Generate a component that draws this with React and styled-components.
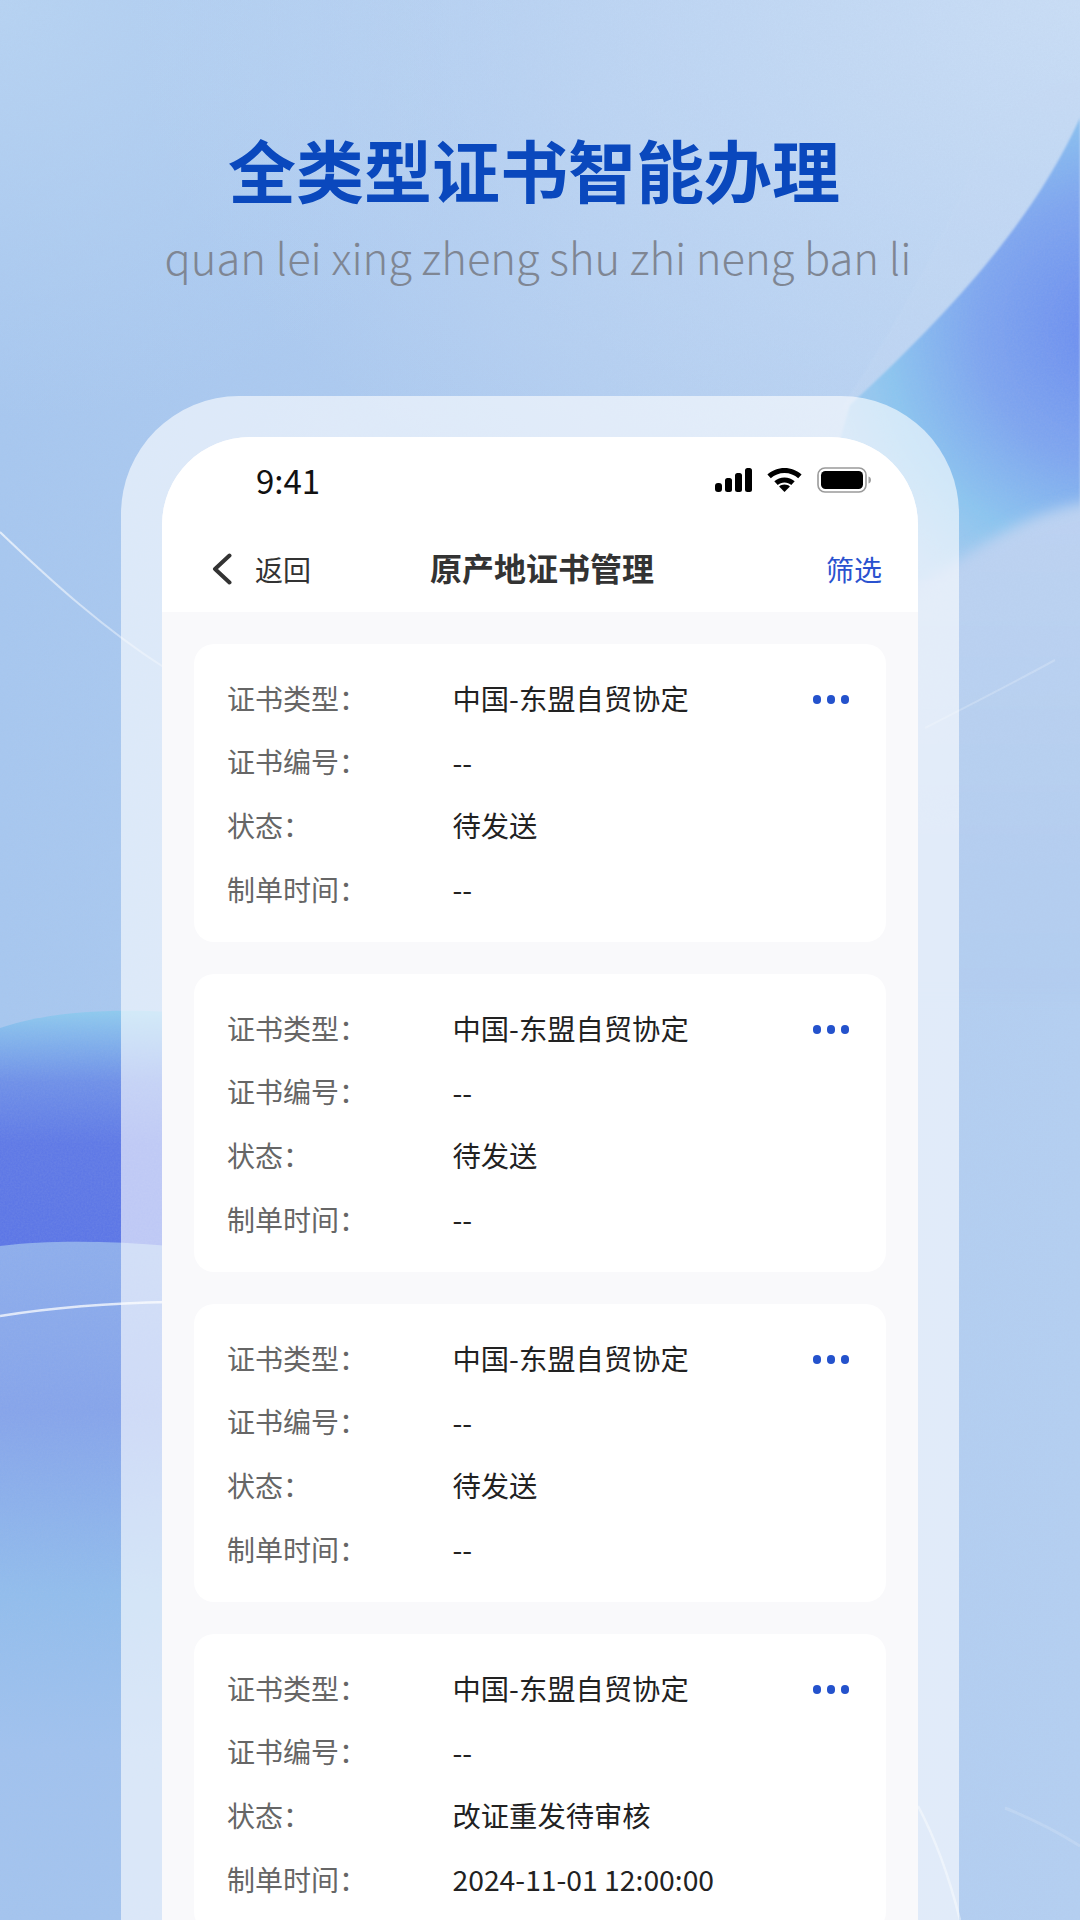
import React from 'react';
import styled, { createGlobalStyle } from 'styled-components';

const GlobalStyle = createGlobalStyle`
  html, body {
    margin: 0;
    padding: 0;
    background: #b5d0f1;
  }
  * {
    box-sizing: border-box;
  }
`;

const Page = styled.div`
  position: relative;
  width: 1080px;
  height: 1920px;
  overflow: hidden;
  font-family: "Noto Sans CJK SC", "Noto Sans", sans-serif;
  background:
    radial-gradient(ellipse 950px 620px at 100% 0, #c9ddf5 0%, rgba(201, 221, 245, 0) 100%),
    radial-gradient(ellipse 520px 420px at 0 0, #b7d3f2 0%, rgba(183, 211, 242, 0) 100%),
    linear-gradient(90deg, #a7c7ef 0%, #b0ccf0 55%, #b4cff1 100%);
`;

const Backdrop = styled.svg`
  position: absolute;
  top: 0;
  left: 0;
  width: 1080px;
  height: 1920px;
`;

const Content = styled.div`
  position: relative;
  display: flex;
  flex-direction: column;
  align-items: center;
  padding-top: 119px;
  height: 100%;
`;

const Title = styled.h1`
  margin: 0 12px 0 0;
  font-size: 68px;
  line-height: 100px;
  font-weight: 700;
  color: #0a48bd;
`;

const Subtitle = styled.p`
  margin: 1px 4px 0 0;
  font-size: 43.5px;
  line-height: 74px;
  font-weight: 300;
  color: #7f8693;
  white-space: nowrap;
`;

const PhoneFrame = styled.div`
  margin-top: 102px;
  flex: 1;
  width: 838px;
  padding: 41px 41px 0;
  border-radius: 118px 118px 0 0;
  background: rgba(255, 255, 255, 0.6);
`;

const Screen = styled.div`
  height: 100%;
  overflow: hidden;
  border-radius: 88px 88px 0 0;
  background: #f9f9fb;
`;

const Header = styled.header`
  height: 175px;
  background: #fff;
`;

const StatusBar = styled.div`
  height: 90px;
  padding: 0 46px 4px 94px;
  display: flex;
  align-items: center;
  justify-content: space-between;
`;

const Clock = styled.span`
  font-size: 33px;
  color: #111;
`;

const StatusIcons = styled.div`
  display: flex;
  align-items: center;
  gap: 15px;
`;

const NavBar = styled.div`
  height: 85px;
  padding: 0 36px 2px 50px;
  display: grid;
  grid-template-columns: 1fr auto 1fr;
  align-items: center;
`;

const BackLink = styled.div`
  display: flex;
  align-items: center;
  gap: 23px;
  font-size: 28px;
  color: #333;
`;

const NavTitle = styled.div`
  margin: 0 10px 3px 0;
  font-size: 32px;
  font-weight: 700;
  color: #333;
`;

const FilterLink = styled.div`
  justify-self: end;
  font-size: 28px;
  color: #2a52cf;
`;

const CardList = styled.div`
  padding: 32px;
  display: flex;
  flex-direction: column;
  gap: 32px;
`;

const Card = styled.div`
  position: relative;
  height: 298px;
  flex: none;
  padding: 22px 33px 0;
  border-radius: 20px;
  background: #fff;
`;

const Row = styled.div`
  display: flex;
  height: 63.6px;
  align-items: center;
  font-size: 28px;
`;

const Label = styled.span`
  width: 225.5px;
  color: #666;
`;

const Value = styled.span`
  font-size: 28.3px;
  color: #222;
`;

const MoreDots = styled.div`
  position: absolute;
  top: 51px;
  right: 37px;
  display: flex;
  gap: 5.5px;
`;

const Dot = styled.i`
  width: 8.5px;
  height: 8.5px;
  border-radius: 50%;
  background: #2452cc;
`;

const certificates = [
  { status: '待发送', time: '--' },
  { status: '待发送', time: '--' },
  { status: '待发送', time: '--' },
  { status: '改证重发待审核', time: '2024-11-01 12:00:00' },
];

function BackgroundArt() {
  return (
    <Backdrop viewBox="0 0 1080 1920">
      <defs>
        <radialGradient id="rightBlob" gradientUnits="userSpaceOnUse" cx="1110" cy="330" r="300">
          <stop offset="0" stopColor="#6a8bf0" />
          <stop offset="0.45" stopColor="#7fa6ef" />
          <stop offset="0.75" stopColor="#8cc5ef" />
          <stop offset="1" stopColor="#a9ccf0" />
        </radialGradient>
        <linearGradient id="wedge" x1="0" y1="0" x2="0" y2="1">
          <stop offset="0" stopColor="#bdd3f2" />
          <stop offset="0.6" stopColor="#b6cff0" />
          <stop offset="1" stopColor="#b2cdf0" />
        </linearGradient>
        <linearGradient id="leftBlob" gradientUnits="userSpaceOnUse" x1="0" y1="1010" x2="0" y2="1250">
          <stop offset="0" stopColor="#8fcbee" />
          <stop offset="0.3" stopColor="#6f90e8" />
          <stop offset="0.56" stopColor="#5f79e6" />
          <stop offset="1" stopColor="#5c76e6" />
        </linearGradient>
        <linearGradient id="leftBand" gradientUnits="userSpaceOnUse" x1="0" y1="1242" x2="0" y2="1920">
          <stop offset="0" stopColor="#8eaeec" />
          <stop offset="0.25" stopColor="#86a4ea" />
          <stop offset="0.52" stopColor="#92bdec" />
          <stop offset="0.75" stopColor="#a1c2ee" />
          <stop offset="1" stopColor="#a4c4ee" />
        </linearGradient>
        <linearGradient id="fadeLine" x1="0" y1="0" x2="1" y2="0">
          <stop offset="0" stopColor="#fff" stopOpacity="0.7" />
          <stop offset="1" stopColor="#fff" stopOpacity="0.3" />
        </linearGradient>
        <filter id="soft">
          <feGaussianBlur stdDeviation="1.2" />
        </filter>
        <filter id="softer" x="-10%" y="-10%" width="120%" height="120%">
          <feGaussianBlur stdDeviation="7" />
        </filter>
        <filter id="grain" x="0" y="0" width="100%" height="100%">
          <feTurbulence type="fractalNoise" baseFrequency="0.55" numOctaves="3" />
          <feColorMatrix values="0 0 0 0 0.45  0 0 0 0 0.55  0 0 0 0 0.75  0 0 0 0.5 -0.12" />
        </filter>
      </defs>
      <path d="M1080 78 C1040 84 1005 100 985 130 C960 210 900 320 840 410 L1080 410 Z" fill="#c6daf4" opacity="0.3" filter="url(#soft)" />
      <path d="M1080 118 C1040 205 975 290 850 405 L800 580 L1080 580 Z" fill="url(#rightBlob)" filter="url(#soft)" />
      <path d="M1100 500 C1040 508 1000 532 955 562 L780 690 L780 1000 L1100 1000 Z" fill="url(#wedge)" filter="url(#softer)" />
      <path d="M0 1028 C40 1014 100 1008 170 1012 L170 1250 L0 1250 Z" fill="url(#leftBlob)" />
      <path d="M0 1246 C50 1240 110 1241 170 1246 L170 1920 L0 1920 Z" fill="url(#leftBand)" />
      <path d="M0 1316 C50 1308 110 1303 170 1302" stroke="#fff" strokeOpacity="0.75" strokeWidth="2.5" fill="none" />
      <path d="M0 532 C50 580 105 630 165 668" stroke="url(#fadeLine)" strokeWidth="2" fill="none" />
      <path d="M925 728 C970 705 1015 682 1055 660" stroke="#fff" strokeOpacity="0.22" strokeWidth="2" fill="none" />
      <path d="M918 1806 C935 1838 950 1880 960 1920" stroke="#fff" strokeOpacity="0.45" strokeWidth="2.5" fill="none" />
      <path d="M1005 1808 C1035 1820 1058 1832 1080 1846" stroke="#fff" strokeOpacity="0.16" strokeWidth="3" fill="none" />
      <rect width="1080" height="1920" filter="url(#grain)" opacity="0.35" />
    </Backdrop>
  );
}

function SignalIcon() {
  return (
    <svg width="37" height="24" viewBox="0 0 37 24" fill="#000">
      <rect x="0" y="15" width="7" height="9" rx="3" />
      <rect x="10" y="10" width="7" height="14" rx="2.5" />
      <rect x="20" y="5" width="7" height="19" rx="2.5" />
      <rect x="30" y="0" width="7" height="24" rx="2.5" />
    </svg>
  );
}

function WifiIcon() {
  return (
    <svg width="35" height="24" viewBox="0 0 35 24" fill="#000">
      <path d="M17.5 0C11 0 5 2.4 0.4 6.5l3.4 3.7C7.4 7 12.2 5 17.5 5s10.1 2 13.7 5.2l3.4-3.7C30 2.4 24 0 17.5 0z" />
      <path d="M17.5 9.5c-3.9 0-7.4 1.4-10.2 3.8l3.4 3.6c1.8-1.5 4.2-2.4 6.8-2.4s5 .9 6.8 2.4l3.4-3.6c-2.8-2.4-6.3-3.8-10.2-3.8z" />
      <path d="M17.5 24l5.4-5.6c-1.4-1.1-3.3-1.8-5.4-1.8s-4 .7-5.4 1.8z" />
    </svg>
  );
}

function BatteryIcon() {
  return (
    <svg width="55" height="26" viewBox="0 0 55 26">
      <rect x="1" y="1" width="48" height="24" rx="7" fill="none" stroke="#9a9a9a" strokeWidth="1.6" />
      <rect x="4" y="4" width="42" height="18" rx="4.5" fill="#000" />
      <path d="M51.5 9.5c1.6.4 2.5 1.8 2.5 3.5s-.9 3.1-2.5 3.5z" fill="#a0a0a0" />
    </svg>
  );
}

function BackChevron() {
  return (
    <svg width="20" height="32" viewBox="0 0 20 32" fill="none">
      <path d="M17.5 2.5L3 16l14.5 13.5" stroke="#333" strokeWidth="4" strokeLinecap="round" strokeLinejoin="round" />
    </svg>
  );
}

function CertificateCard({ status, time }) {
  return (
    <Card>
      <Row>
        <Label>证书类型：</Label>
        <Value>中国-东盟自贸协定</Value>
      </Row>
      <Row>
        <Label>证书编号：</Label>
        <Value>--</Value>
      </Row>
      <Row>
        <Label>状态：</Label>
        <Value>{status}</Value>
      </Row>
      <Row>
        <Label>制单时间：</Label>
        <Value>{time}</Value>
      </Row>
      <MoreDots>
        <Dot />
        <Dot />
        <Dot />
      </MoreDots>
    </Card>
  );
}

export default function App() {
  return (
    <Page>
      <GlobalStyle />
      <BackgroundArt />
      <Content>
        <Title>全类型证书智能办理</Title>
        <Subtitle>quan lei xing zheng shu zhi neng ban li</Subtitle>
        <PhoneFrame>
          <Screen>
            <Header>
              <StatusBar>
                <Clock>9:41</Clock>
                <StatusIcons>
                  <SignalIcon />
                  <WifiIcon />
                  <BatteryIcon />
                </StatusIcons>
              </StatusBar>
              <NavBar>
                <BackLink>
                  <BackChevron />
                  返回
                </BackLink>
                <NavTitle>原产地证书管理</NavTitle>
                <FilterLink>筛选</FilterLink>
              </NavBar>
            </Header>
            <CardList>
              {certificates.map((cert, i) => (
                <CertificateCard key={i} status={cert.status} time={cert.time} />
              ))}
            </CardList>
          </Screen>
        </PhoneFrame>
      </Content>
    </Page>
  );
}
